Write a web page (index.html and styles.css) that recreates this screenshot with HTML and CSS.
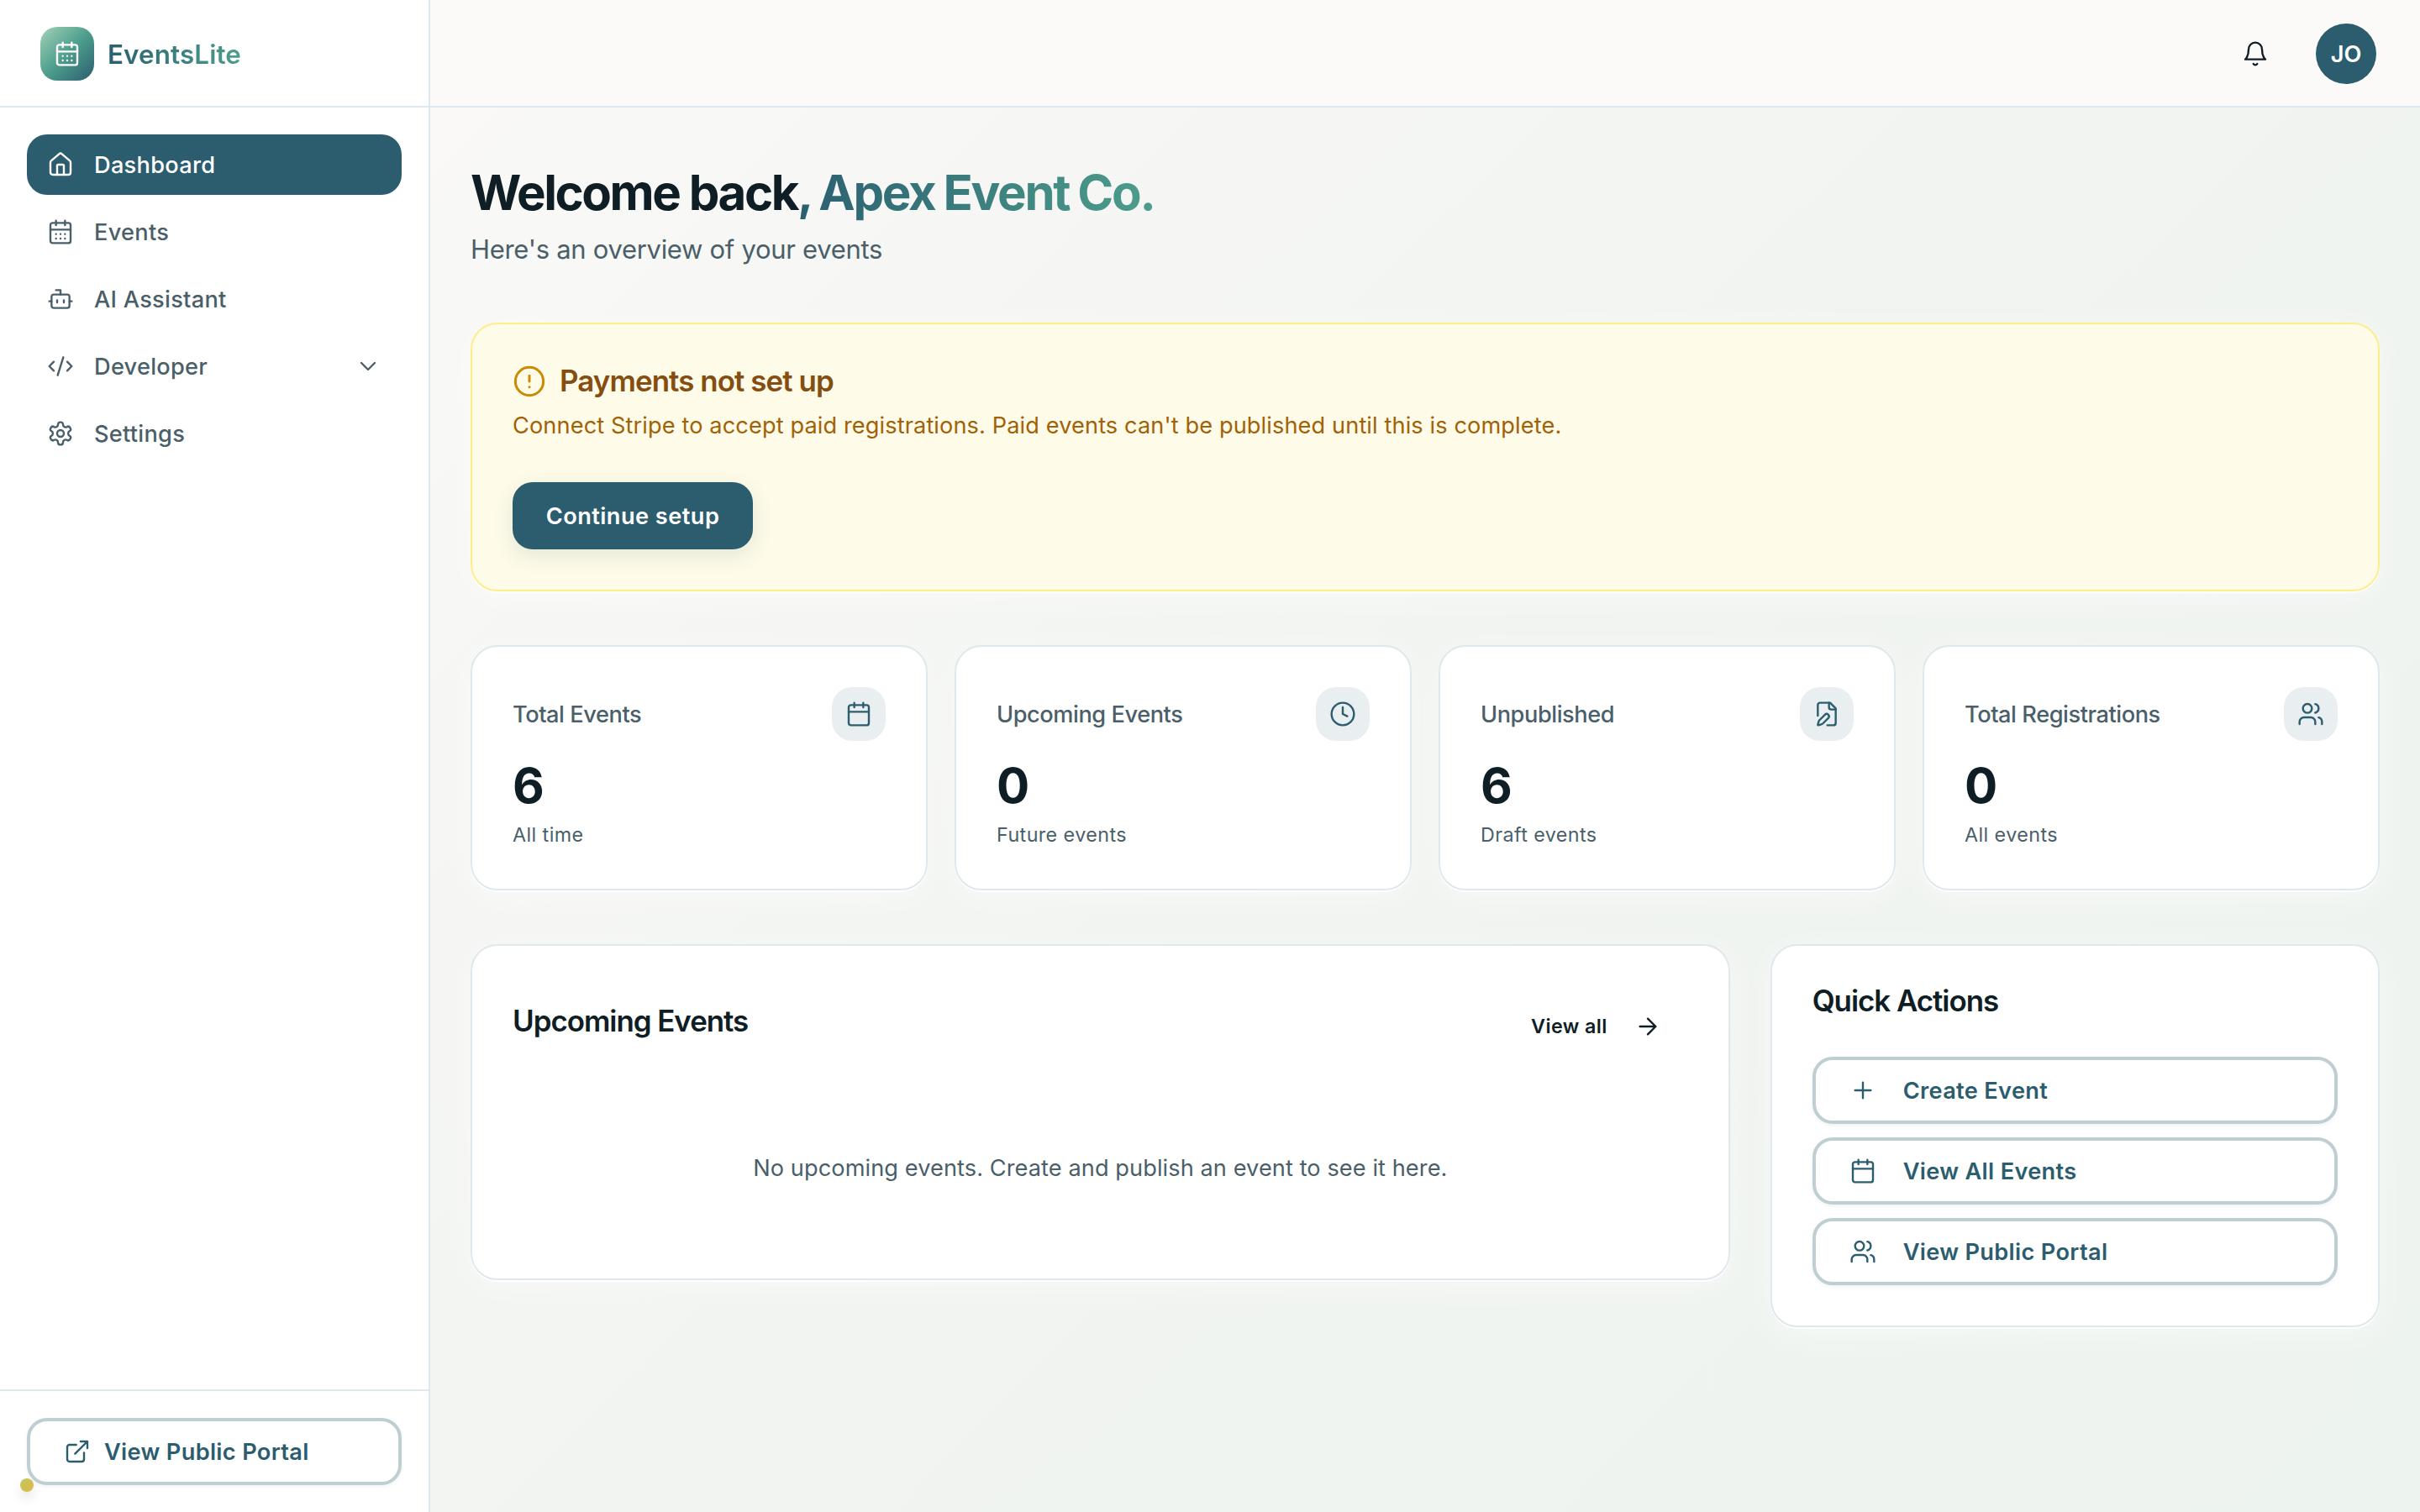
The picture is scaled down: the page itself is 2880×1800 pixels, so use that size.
FILE: index.html
```html
<!DOCTYPE html>
<html lang="en">
<head>
    <meta charset="UTF-8">
    <meta name="viewport" content="width=device-width, initial-scale=1.0">
    <title>EventsLite — Dashboard</title>
    <link rel="stylesheet" href="styles.css">
</head>
<body>
    <!-- Icon sprite -->
    <svg class="sprite">
        <symbol id="calendar-days" viewBox="0 0 24 24">
            <path d="M8 2v4M16 2v4M3 10h18M8 14h.01M12 14h.01M16 14h.01M8 18h.01M12 18h.01M16 18h.01" />
            <rect width="18" height="18" x="3" y="4" rx="2" />
        </symbol>
        <symbol id="calendar" viewBox="0 0 24 24">
            <path d="M8 2v4M16 2v4M3 10h18" />
            <rect width="18" height="18" x="3" y="4" rx="2" />
        </symbol>
        <symbol id="house" viewBox="0 0 24 24">
            <path d="M15 21v-8a1 1 0 0 0-1-1h-4a1 1 0 0 0-1 1v8" />
            <path d="M3 10a2 2 0 0 1 .709-1.528l7-5.999a2 2 0 0 1 2.582 0l7 5.999A2 2 0 0 1 21 10v9a2 2 0 0 1-2 2H5a2 2 0 0 1-2-2z" />
        </symbol>
        <symbol id="bot" viewBox="0 0 24 24">
            <path d="M12 8V4H8M2 14h2M20 14h2M15 13v2M9 13v2" />
            <rect width="16" height="12" x="4" y="8" rx="2" />
        </symbol>
        <symbol id="code" viewBox="0 0 24 24">
            <path d="m18 16 4-4-4-4M6 8l-4 4 4 4M14.5 4l-5 16" />
        </symbol>
        <symbol id="settings" viewBox="0 0 24 24">
            <path d="M12.22 2h-.44a2 2 0 0 0-2 2v.18a2 2 0 0 1-1 1.73l-.43.25a2 2 0 0 1-2 0l-.15-.08a2 2 0 0 0-2.73.73l-.22.38a2 2 0 0 0 .73 2.73l.15.1a2 2 0 0 1 1 1.72v.51a2 2 0 0 1-1 1.74l-.15.09a2 2 0 0 0-.73 2.73l.22.38a2 2 0 0 0 2.73.73l.15-.08a2 2 0 0 1 2 0l.43.25a2 2 0 0 1 1 1.73V20a2 2 0 0 0 2 2h.44a2 2 0 0 0 2-2v-.18a2 2 0 0 1 1-1.73l.43-.25a2 2 0 0 1 2 0l.15.08a2 2 0 0 0 2.73-.73l.22-.39a2 2 0 0 0-.73-2.73l-.15-.08a2 2 0 0 1-1-1.74v-.5a2 2 0 0 1 1-1.74l.15-.09a2 2 0 0 0 .73-2.73l-.22-.38a2 2 0 0 0-2.73-.73l-.15.08a2 2 0 0 1-2 0l-.43-.25a2 2 0 0 1-1-1.73V4a2 2 0 0 0-2-2z" />
            <circle cx="12" cy="12" r="3" />
        </symbol>
        <symbol id="chevron-down" viewBox="0 0 24 24">
            <path d="m6 9 6 6 6-6" />
        </symbol>
        <symbol id="external-link" viewBox="0 0 24 24">
            <path d="M15 3h6v6M10 14 21 3M18 13v6a2 2 0 0 1-2 2H5a2 2 0 0 1-2-2V8a2 2 0 0 1 2-2h6" />
        </symbol>
        <symbol id="bell" viewBox="0 0 24 24">
            <path d="M6 8a6 6 0 0 1 12 0c0 7 3 9 3 9H3s3-2 3-9M10.3 21a1.94 1.94 0 0 0 3.4 0" />
        </symbol>
        <symbol id="alert" viewBox="0 0 24 24">
            <circle cx="12" cy="12" r="10" />
            <path d="M12 8v4M12 16h.01" />
        </symbol>
        <symbol id="clock" viewBox="0 0 24 24">
            <circle cx="12" cy="12" r="10" />
            <path d="M12 6v6l4 2" />
        </symbol>
        <symbol id="file-pen" viewBox="0 0 24 24">
            <path d="M12.5 22H18a2 2 0 0 0 2-2V7l-5-5H6a2 2 0 0 0-2 2v9.5" />
            <path d="M14 2v4a2 2 0 0 0 2 2h4" />
            <path d="M13.378 15.626a1 1 0 1 0-3.004-3.004l-5.01 5.012a2 2 0 0 0-.506.854l-.837 2.87a.5.5 0 0 0 .62.62l2.87-.837a2 2 0 0 0 .854-.506z" />
        </symbol>
        <symbol id="users" viewBox="0 0 24 24">
            <path d="M16 21v-2a4 4 0 0 0-4-4H6a4 4 0 0 0-4 4v2M22 21v-2a4 4 0 0 0-3-3.87M16 3.13a4 4 0 0 1 0 7.75" />
            <circle cx="9" cy="7" r="4" />
        </symbol>
        <symbol id="arrow-right" viewBox="0 0 24 24">
            <path d="M5 12h14M12 5l7 7-7 7" />
        </symbol>
        <symbol id="plus" viewBox="0 0 24 24">
            <path d="M5 12h14M12 5v14" />
        </symbol>
    </svg>

    <aside class="sidebar">
        <div class="brand">
            <span class="brand-logo"><svg class="icon"><use href="#calendar-days" /></svg></span>
            <span class="brand-name">EventsLite</span>
        </div>
        <nav class="nav">
            <a class="nav-item active"><svg class="icon"><use href="#house" /></svg>Dashboard</a>
            <a class="nav-item"><svg class="icon"><use href="#calendar-days" /></svg>Events</a>
            <a class="nav-item"><svg class="icon"><use href="#bot" /></svg>AI Assistant</a>
            <a class="nav-item"><svg class="icon"><use href="#code" /></svg>Developer<svg class="icon chevron"><use href="#chevron-down" /></svg></a>
            <a class="nav-item"><svg class="icon"><use href="#settings" /></svg>Settings</a>
        </nav>
        <div class="sidebar-footer">
            <a class="btn btn-outline"><svg class="icon"><use href="#external-link" /></svg>View Public Portal</a>
        </div>
    </aside>

    <div class="page">
        <header class="topbar">
            <svg class="icon"><use href="#bell" /></svg>
            <span class="avatar">JO</span>
        </header>

        <main class="content">
            <h1>Welcome back<span class="gradient-text">, Apex Event Co.</span></h1>
            <p class="subtitle">Here's an overview of your events</p>

            <section class="card banner">
                <h2 class="banner-title"><svg class="icon"><use href="#alert" /></svg>Payments not set up</h2>
                <p class="banner-text">Connect Stripe to accept paid registrations. Paid events can't be published until this is complete.</p>
                <a class="btn btn-primary">Continue setup</a>
            </section>

            <section class="stats">
                <div class="card">
                    <div class="stat-head">Total Events<span class="stat-icon"><svg class="icon"><use href="#calendar" /></svg></span></div>
                    <div class="stat-value">6</div>
                    <div class="stat-note">All time</div>
                </div>
                <div class="card">
                    <div class="stat-head">Upcoming Events<span class="stat-icon"><svg class="icon"><use href="#clock" /></svg></span></div>
                    <div class="stat-value">0</div>
                    <div class="stat-note">Future events</div>
                </div>
                <div class="card">
                    <div class="stat-head">Unpublished<span class="stat-icon"><svg class="icon"><use href="#file-pen" /></svg></span></div>
                    <div class="stat-value">6</div>
                    <div class="stat-note">Draft events</div>
                </div>
                <div class="card">
                    <div class="stat-head">Total Registrations<span class="stat-icon"><svg class="icon"><use href="#users" /></svg></span></div>
                    <div class="stat-value">0</div>
                    <div class="stat-note">All events</div>
                </div>
            </section>

            <section class="panels">
                <div class="card upcoming">
                    <div class="upcoming-head">
                        <h2>Upcoming Events</h2>
                        <a class="view-all">View all<svg class="icon"><use href="#arrow-right" /></svg></a>
                    </div>
                    <p class="empty">No upcoming events. Create and publish an event to see it here.</p>
                </div>
                <div class="card">
                    <h2>Quick Actions</h2>
                    <div class="actions">
                        <a class="btn btn-outline"><svg class="icon"><use href="#plus" /></svg>Create Event</a>
                        <a class="btn btn-outline"><svg class="icon"><use href="#calendar" /></svg>View All Events</a>
                        <a class="btn btn-outline"><svg class="icon"><use href="#users" /></svg>View Public Portal</a>
                    </div>
                </div>
            </section>
        </main>
    </div>

    <span class="corner-dot"></span>
</body>
</html>
```

FILE: styles.css
```css
* {
    box-sizing: border-box;
}

body {
    margin: 0;
    display: flex;
    height: 100vh;
    overflow: hidden;
    font-family: Inter, sans-serif;
    font-size: 27.2px;
    line-height: 40px;
    color: #0f1e25;
    background: #fff;
}

h1, h2, p {
    margin: 0;
}

.sprite {
    position: absolute;
    width: 0;
    height: 0;
}

.icon {
    width: 32px;
    height: 32px;
    flex-shrink: 0;
    fill: none;
    stroke: currentColor;
    stroke-width: 1.8;
    stroke-linecap: round;
    stroke-linejoin: round;
}

/* Sidebar */
.sidebar {
    width: 512px;
    flex-shrink: 0;
    display: flex;
    flex-direction: column;
    background: #fff;
    border-right: 2px solid #dfe8ec;
}

.brand {
    height: 128px;
    display: flex;
    align-items: center;
    gap: 16px;
    padding: 2px 48px 0;
    border-bottom: 2px solid #dfe8ec;
}

.brand-logo {
    width: 64px;
    height: 64px;
    display: flex;
    align-items: center;
    justify-content: center;
    border-radius: 20px;
    color: #fff;
    background: linear-gradient(135deg, #a3d2b8 0%, #4d9e8c 50%, #2b5d6e 100%);
}

.brand-name {
    padding-top: 2px;
    font-size: 31.4px;
    font-weight: 600;
    letter-spacing: 0.1px;
}

.brand-name, .gradient-text {
    color: transparent;
    background: linear-gradient(90deg, #2b5f70, #4d9e8c);
    -webkit-background-clip: text;
    background-clip: text;
}

.nav {
    flex: 1;
    display: flex;
    flex-direction: column;
    gap: 8px;
    padding: 32px;
}

.nav-item {
    height: 72px;
    display: flex;
    align-items: center;
    gap: 24px;
    padding: 2px 24px 0;
    border-radius: 24px;
    font-weight: 500;
    letter-spacing: 0.27px;
    color: #4a5f69;
}

/* Labels sit 1px low, icons stay centered */
.nav-item .icon, .btn .icon {
    margin-top: -2px;
}

.nav-item.active {
    color: #fff;
    background: #2b5d6e;
}

.chevron {
    margin-left: auto;
}

.sidebar-footer {
    padding: 32px;
    border-top: 2px solid #dfe8ec;
}

/* Buttons */
.btn {
    height: 80px;
    display: flex;
    align-items: center;
    padding: 2px 40px 0;
    border-radius: 24px;
    font-weight: 600;
    letter-spacing: 0.32px;
}

.btn-outline {
    gap: 16px;
    border: 4px solid #bfced3;
    color: #2b5d6e;
    background: #fff;
    box-shadow: 0 2px 4px rgba(15, 30, 37, 0.06);
}

.btn-primary {
    width: 286px;
    justify-content: center;
    padding: 2px 0 0;
    letter-spacing: 0.45px;
    color: #fff;
    background: #2b5d6e;
    box-shadow: 0 8px 24px rgba(43, 93, 110, 0.12);
}

/* Top bar */
.page {
    flex: 1;
    display: flex;
    flex-direction: column;
    background: linear-gradient(135deg, #faf9f7 0%, #f1f4f1 50%, #edf3ef 100%);
}

.topbar {
    height: 128px;
    display: flex;
    align-items: center;
    justify-content: flex-end;
    gap: 56px;
    padding: 2px 52px 0;
    background: #fcfaf8;
    border-bottom: 2px solid #dfe8ec;
}

.avatar {
    width: 72px;
    height: 72px;
    display: flex;
    align-items: center;
    justify-content: center;
    padding-top: 2px;
    border-radius: 50%;
    font-weight: 600;
    color: #fff;
    background: #2b5d6e;
}

/* Main content */
.content {
    padding: 64px 48px;
}

h1 {
    font-size: 58.2px;
    line-height: 74px;
    font-weight: 700;
    letter-spacing: -2.45px;
}

h1 .gradient-text {
    letter-spacing: -2.3px;
    word-spacing: -1.5px;
}

h2 {
    font-size: 34.9px;
    line-height: 34px;
    padding-bottom: 2px;
    font-weight: 600;
    letter-spacing: -1.03px;
}

.subtitle {
    margin: 6px 0 64px;
    padding-top: 1px;
    font-size: 31px;
    line-height: 47px;
    letter-spacing: -0.3px;
    color: #4a5f69;
}

.card {
    padding: 48px;
    border: 2px solid #dfe8ec;
    border-radius: 32px;
    background: #fff;
    box-shadow: 0 2px 0 rgba(255, 255, 255, 0.9), 0 8px 40px rgba(255, 255, 255, 0.5);
}

.banner {
    border-color: #feee8a;
    background: #fefbe8;
}

.banner-title {
    display: flex;
    align-items: center;
    gap: 16px;
    height: 40px;
    letter-spacing: -0.92px;
    color: #854d0f;
}

.banner-title .icon {
    width: 40px;
    height: 40px;
    margin-top: 2px;
    color: #ca8a04;
}

.banner-text {
    margin: 13px 0 47px;
    letter-spacing: 0.1px;
    color: #a16207;
}

.stats {
    display: grid;
    grid-template-columns: repeat(4, 1fr);
    gap: 32px;
    margin: 64px 0;
}

.stat-head {
    height: 64px;
    display: flex;
    align-items: center;
    justify-content: space-between;
    padding-top: 2px;
    font-weight: 500;
    letter-spacing: -0.44px;
    color: #4a5f69;
}

.stat-icon {
    width: 64px;
    height: 64px;
    display: flex;
    align-items: center;
    justify-content: center;
    margin-top: -2px;
    border-radius: 24px;
    color: #2b5d6e;
    background: #e9eef0;
}

.stat-value {
    margin: 16px 0 6px;
    font-size: 58.2px;
    line-height: 74px;
    font-weight: 700;
}

.stat-note {
    font-size: 23.3px;
    line-height: 32px;
    letter-spacing: 0.42px;
    color: #4a5f69;
}

.panels {
    display: grid;
    grid-template-columns: repeat(3, 1fr);
    align-items: start;
    gap: 48px;
}

.upcoming {
    grid-column: span 2;
}

.upcoming-head {
    display: flex;
    align-items: flex-start;
    justify-content: space-between;
    margin-bottom: 48px;
    padding-top: 12px;
}

.upcoming-head h2 {
    margin-top: 12px;
}

.view-all {
    height: 72px;
    display: flex;
    align-items: center;
    gap: 32px;
    padding: 0 32px;
    font-size: 23.3px;
    font-weight: 600;
    letter-spacing: 0.39px;
}

.empty {
    padding: 65px 0 63px;
    text-align: center;
    letter-spacing: 0.07px;
    color: #4a5f69;
}

.actions {
    display: flex;
    flex-direction: column;
    gap: 16px;
    margin-top: 48px;
}

.actions .btn {
    gap: 32px;
}

/* Small status dot pinned to the window corner */
.corner-dot {
    position: absolute;
    left: 24px;
    bottom: 24px;
    width: 16px;
    height: 16px;
    border-radius: 50%;
    background: linear-gradient(135deg, #c3c763, #dcb944);
    box-shadow: 0 8px 12px rgba(15, 30, 37, 0.1);
}
```
